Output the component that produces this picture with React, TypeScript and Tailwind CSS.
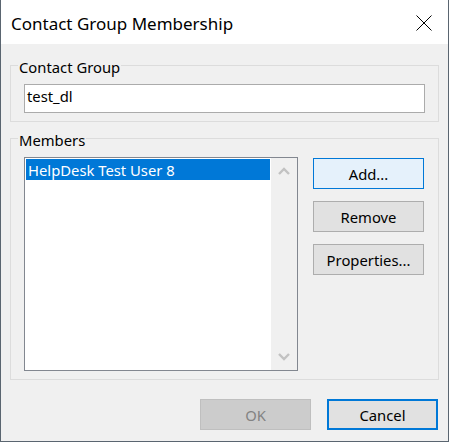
import React from "react";

function Chevron({ down }: { down?: boolean }) {
  return (
    <svg width="12" height="8" viewBox="0 0 12 8" className={down ? "rotate-180" : ""}>
      <polyline points="1,7 6,2 11,7" fill="none" stroke="#c2c2c2" strokeWidth="2.4" strokeLinejoin="miter" />
    </svg>
  );
}

function GroupLabel({ children }: { children: React.ReactNode }) {
  return (
    <div className="absolute top-[-9px] left-[7px] bg-[#f0f0f0] px-[1px] leading-[20px]">{children}</div>
  );
}

export default function App() {
  return (
    <div className="w-[449px] h-[442px] flex flex-col border-x border-b border-[#5a6570] bg-[#f0f0f0] text-black font-['Noto_Sans',sans-serif] text-[14.8px] leading-[20px]">
      <div className="h-[44px] shrink-0 bg-white flex justify-between pl-[10px] pr-[16px]">
        <div className="pt-[14px] text-[17px] leading-[20px]">Contact Group Membership</div>
        <svg width="16" height="16" viewBox="0 0 16 16" className="mt-[15px]">
          <line x1="0.5" y1="0.5" x2="15.5" y2="15.5" stroke="#000" strokeWidth="1" />
          <line x1="15.5" y1="0.5" x2="0.5" y2="15.5" stroke="#000" strokeWidth="1" />
        </svg>
      </div>
      <div className="flex-1 flex flex-col px-[9px] pt-[21px]">
        <div className="relative h-[57px] border border-[#dcdcdc] px-[13px] pt-[18px]">
          <GroupLabel>Contact Group</GroupLabel>
          <div className="h-[29px] w-full border border-[#ababab] bg-white pl-[2px] pt-[1px]">test_dl</div>
        </div>
        <div className="relative mt-[16px] h-[242px] border border-[#dcdcdc] pl-[13px] pt-[18px] flex items-start">
          <GroupLabel>Members</GroupLabel>
          <div className="w-[274px] h-[214px] border border-[#828790] bg-white flex">
            <div className="w-[246px] p-[1px]">
              <div className="h-[21px] bg-[#0078d7] text-white pl-[2px] pt-[1px] whitespace-nowrap">HelpDesk Test User 8</div>
            </div>
            <div className="w-[26px] bg-[#f0f0f0] flex flex-col justify-between">
              <div className="h-[26px] flex items-center justify-center">
                <Chevron />
              </div>
              <div className="h-[26px] flex items-center justify-center">
                <Chevron down />
              </div>
            </div>
          </div>
          <div className="ml-[15px] mt-[1px] flex flex-col gap-[12px]">
            <button className="w-[111px] h-[31px] border border-[#0078d7] bg-[#e5f1fb] flex items-center justify-center">Add...</button>
            <button className="w-[111px] h-[31px] border border-[#adadad] bg-[#e1e1e1] flex items-center justify-center">Remove</button>
            <button className="w-[111px] h-[31px] border border-[#adadad] bg-[#e1e1e1] flex items-center justify-center">Properties...</button>
          </div>
        </div>
        <div className="mt-[19px] mr-[1px] flex justify-end gap-[16px]">
          <button className="w-[111px] h-[31px] border border-[#bfbfbf] bg-[#cccccc] text-[#838383] flex items-center justify-center">OK</button>
          <button className="w-[111px] h-[31px] border-2 border-[#0078d7] bg-[#e1e1e1] flex items-center justify-center">Cancel</button>
        </div>
      </div>
    </div>
  );
}
